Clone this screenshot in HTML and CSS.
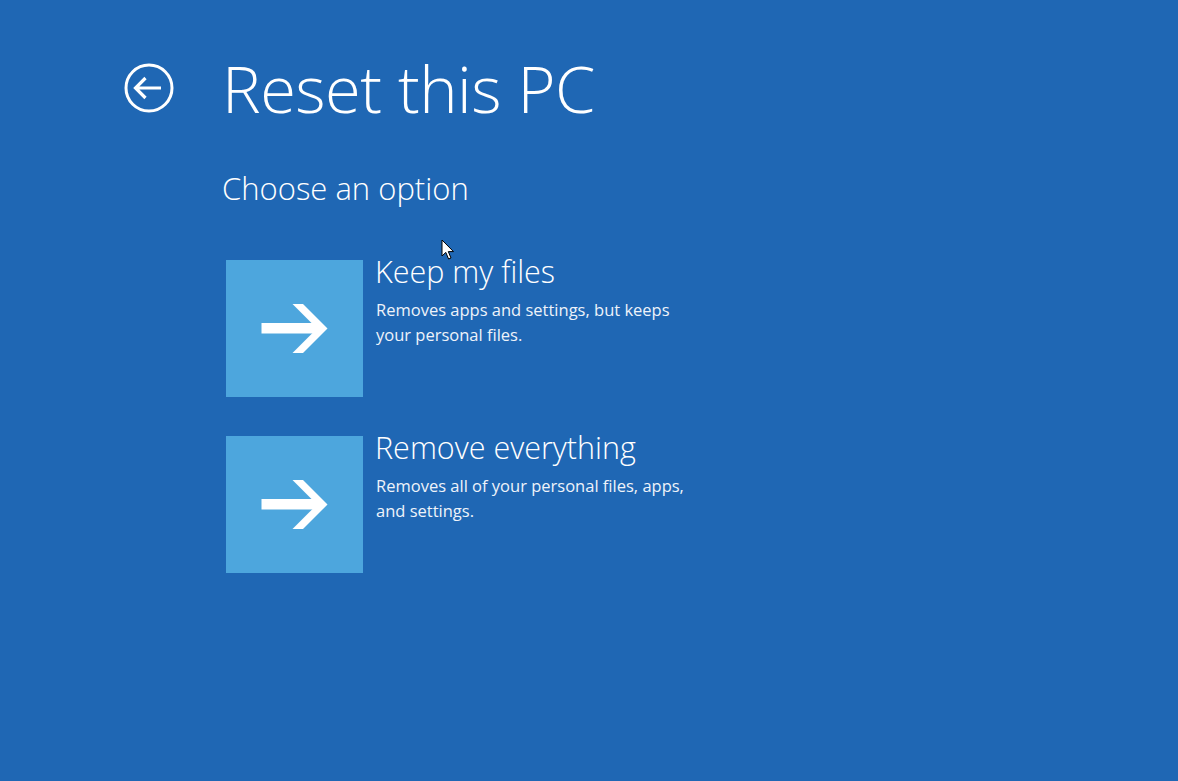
FILE: index.html
```html
<!DOCTYPE html>
<html lang="en">
<head>
<meta charset="utf-8">
<title>Reset this PC</title>
<link rel="stylesheet" href="styles.css">
</head>
<body>
<div class="page">
  <header class="header">
    <svg class="back" width="50" height="50" viewBox="0 0 50 50" aria-hidden="true">
      <circle cx="25" cy="25" r="23" fill="none" stroke="#fff" stroke-width="3"/>
      <path d="M37 25H13M21.5 15L11.5 25L21.5 35" fill="none" stroke="#fff" stroke-width="3.2" stroke-linejoin="miter"/>
    </svg>
    <h1 class="title">Reset this PC</h1>
  </header>
  <main class="content">
    <h2 class="subtitle">Choose an option</h2>
    <div class="options">
      <div class="option">
        <div class="tile">
          <svg width="68" height="50" viewBox="0 0 68 50" aria-hidden="true">
            <path d="M0.5 19H57V29.5H0.5Z" fill="#fff"/>
            <path d="M31.5 0H42L66.5 24.5L42 49H31.5L56 24.5Z" fill="#fff"/>
          </svg>
        </div>
        <div class="text">
          <div class="opt-title">Keep my files</div>
          <div class="opt-desc">Removes apps and settings, but keeps<br>your personal files.</div>
        </div>
      </div>
      <div class="option">
        <div class="tile">
          <svg width="68" height="50" viewBox="0 0 68 50" aria-hidden="true">
            <path d="M0.5 19H57V29.5H0.5Z" fill="#fff"/>
            <path d="M31.5 0H42L66.5 24.5L42 49H31.5L56 24.5Z" fill="#fff"/>
          </svg>
        </div>
        <div class="text">
          <div class="opt-title">Remove everything</div>
          <div class="opt-desc">Removes all of your personal files, apps,<br>and settings.</div>
        </div>
      </div>
    </div>
  </main>
  <svg class="cursor" width="14" height="22" viewBox="0 0 14 22" aria-hidden="true">
    <path d="M1 1V17L4.8 13.4L7.6 20L10 19L7.3 12.6H12.5Z" fill="#fff" stroke="#000" stroke-width="1"/>
  </svg>
</div>
</body>
</html>
```
FILE: styles.css
```css
html, body {
  margin: 0;
  padding: 0;
  height: 100%;
}
body {
  background: #1f67b4;
  color: #fff;
  font-family: "Open Sans", "Noto Sans", sans-serif;
  overflow: hidden;
}
.page {
  position: relative;
  padding: 50px 0 0 124px;
}
.header {
  display: flex;
  align-items: center;
  gap: 48px;
}
.back {
  display: block;
  flex: none;
}
.title {
  margin: 0;
  font-weight: 300;
  font-size: 65px;
  line-height: 76px;
  letter-spacing: -0.5px;
}
.content {
  margin-left: 98px;
}
.subtitle {
  margin: 42px 0 0 0;
  font-weight: 300;
  font-size: 31px;
  line-height: 40px;
}
.options {
  margin-top: 52px;
  margin-left: 4px;
  display: flex;
  flex-direction: column;
  gap: 39px;
}
.option {
  display: flex;
  gap: 12px;
}
.tile {
  width: 137px;
  height: 137px;
  background: #4da6dd;
  display: flex;
  align-items: center;
  justify-content: center;
  flex: none;
}
.tile svg {
  display: block;
}
.text {
  margin-top: -7px;
}
.opt-title {
  font-weight: 300;
  font-size: 30.5px;
  line-height: 36px;
}
.opt-desc {
  margin-top: 8px;
  margin-left: 1px;
  font-size: 16.5px;
  line-height: 25px;
  color: #eef3fa;
}
.cursor {
  position: absolute;
  left: 441px;
  top: 239px;
}
```
